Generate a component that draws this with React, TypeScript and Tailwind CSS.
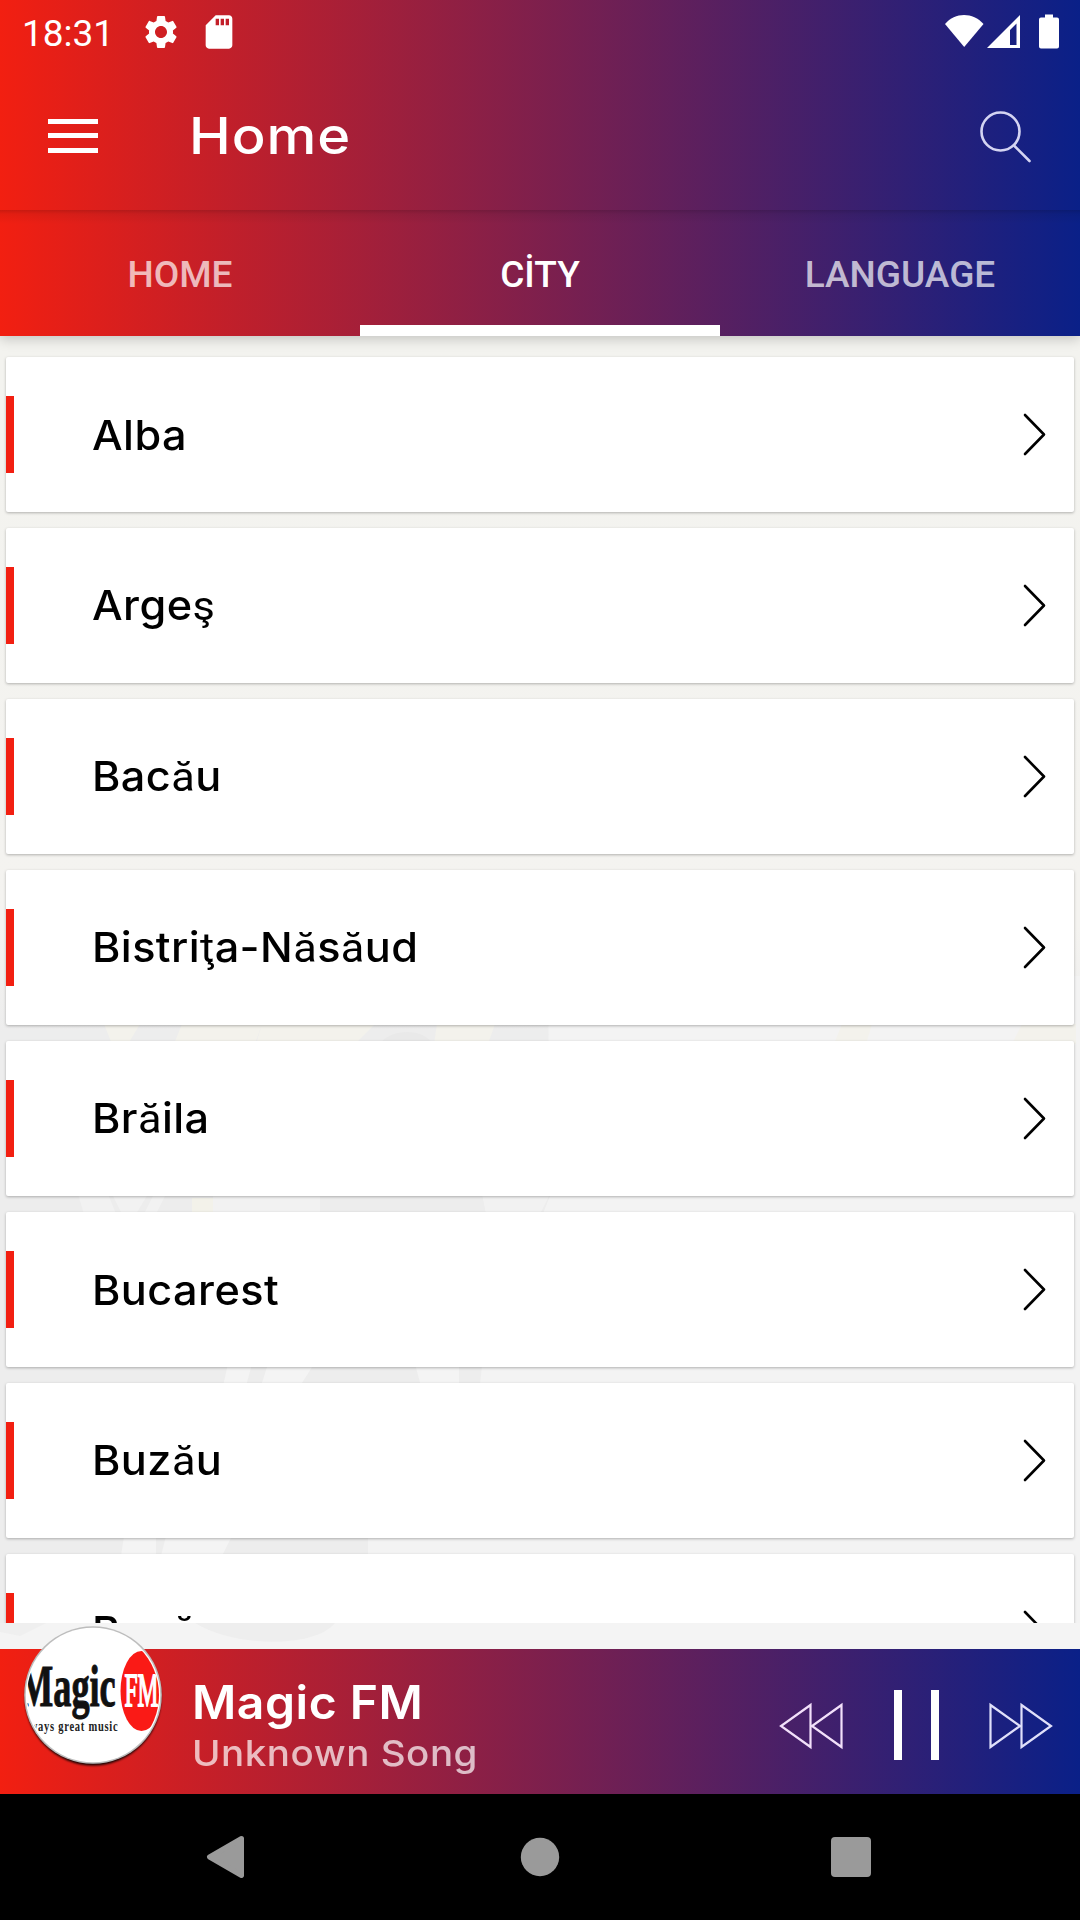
import { MdSdCard, MdSettings } from "react-icons/md"

const TABS = ["HOME", "CİTY", "LANGUAGE"]

const CITIES = [
  { id: 1, name: "Alba" },
  { id: 2, name: "Argeş" },
  { id: 3, name: "Bacău" },
  { id: 4, name: "Bistriţa-Năsăud" },
  { id: 5, name: "Brăila" },
  { id: 6, name: "Bucarest" },
  { id: 7, name: "Buzău" },
  { id: 8, name: "Buzău" },
]

// Accented letters fall back to the system font
function CityName({ name }: { name: string }) {
  return (
    <span className="inline-block origin-left scale-x-[1.055] font-['Inter',sans-serif] font-medium text-[41px] leading-[50px] tracking-[0.4px] text-black whitespace-nowrap">
      {name.split(/([ăşţ])/).map((part, i) =>
        i % 2 === 1 ? (
          <span key={i} className="font-['Roboto',sans-serif] font-normal">
            {part}
          </span>
        ) : (
          part
        )
      )}
    </span>
  )
}

function CityCard({ name }: { name: string }) {
  return (
    <li className="flex items-center h-[155px] shrink-0 bg-white rounded-[2px] shadow-[0_1px_3px_rgba(0,0,0,0.28)]">
      <div className="w-2 h-[77px] bg-[#f21f11]" />
      <div className="flex-1 pl-[78px]">
        <CityName name={name} />
      </div>
      <svg className="w-[23px] h-[43px] mr-7" viewBox="0 0 23 43" fill="none" stroke="black">
        <path d="M2 2L21 21.5L2 41" strokeWidth="2.6" strokeLinecap="round" strokeLinejoin="round" />
      </svg>
    </li>
  )
}

function StatusBar() {
  return (
    <div className="flex items-center h-[63px] pl-[22px] pr-[21px] text-white">
      <span className="w-[119px] text-[37px] leading-[63px] pt-[3px]">18:31</span>
      <MdSettings className="w-10 h-10" />
      <MdSdCard className="w-10 h-10 ml-[18px]" />
      <div className="flex-1" />
      <svg className="w-[115px] h-[36px]" viewBox="0 0 115 36" fill="white">
        {/* Wifi */}
        <path d="M1 10C11 -2 29 -2 39.500 10L20.200 33Z" />
        {/* Signal */}
        <path fillRule="evenodd" d="M43 34L76 1V34ZM66 16V31H72.500V9.500Z" />
        {/* Battery */}
        <path d="M101 0.500H109V3.500H113Q115 3.500 115 5.500V32.500Q115 34.500 113 34.500H97Q95 34.500 95 32.500V5.500Q95 3.500 97 3.500H101Z" />
      </svg>
    </div>
  )
}

function Toolbar() {
  return (
    <div className="flex items-center h-[147px] pb-0.5 pl-12 pr-12">
      <button className="flex flex-col justify-between w-[50px] h-[34px]" aria-label="Open menu">
        <span className="block w-full h-[5px] bg-white" />
        <span className="block w-full h-[5px] bg-white" />
        <span className="block w-full h-[5px] bg-white" />
      </button>
      <h1 className="flex-1 ml-[91px] text-white">
        <span className="inline-block origin-left scale-x-[1.1] font-['Inter',sans-serif] font-medium text-[51px] leading-[60px] tracking-[0.8px]">
          Home
        </span>
      </h1>
      <svg className="w-[54px] h-[54px]" viewBox="0 0 54 54" fill="none" stroke="#d4d4f2" strokeWidth="2.6" strokeLinecap="round">
        <circle cx="22.500" cy="22.500" r="19" />
        <path d="M36 36.500L51.500 52" />
      </svg>
    </div>
  )
}

function Tabs() {
  return (
    <div className="flex h-[126px] bg-[linear-gradient(to_bottom,rgba(0,0,0,0.16),rgba(0,0,0,0.06)_4px,transparent_14px)]">
      {TABS.map((tab) => (
        <button
          key={tab}
          className={`flex-1 pt-[15px] text-[37px] font-medium border-b-[11px] ${
            tab === "CİTY" ? "text-white border-white" : "text-white/70 border-transparent"
          }`}
        >
          {tab}
        </button>
      ))}
    </div>
  )
}

// Faint artwork behind the list
function Backdrop() {
  return (
    <svg className="absolute inset-0 w-full h-full" viewBox="0 0 1080 1313" preserveAspectRatio="none">
      <defs>
        <linearGradient id="bg" x1="0" y1="0" x2="0" y2="1">
          <stop offset="0" stopColor="#f3f3ef" />
          <stop offset="0.45" stopColor="#f4f3f0" />
          <stop offset="0.53" stopColor="#ededed" />
          <stop offset="1" stopColor="#ededed" />
        </linearGradient>
      </defs>
      <rect width="1080" height="1313" fill="url(#bg)" />
      <path d="M548 640H1080V1313H368V1200L480 1048L482 1030L550 860Z" fill="#f3f3f3" />
      <path d="M104 688H140L128 708H112ZM182 688H262L255 708H174ZM262 688H375L355 708H256ZM437 688H495L488 708H434ZM842 688H872L866 708H834ZM1022 688H1076V708H1012Z" fill="#f3f2ec" />
      <path d="M380 708C390 692 425 692 432 708Z" fill="#e9e9e9" />
      <path d="M78 858H108L116 878H84ZM112 858H148L136 878H122ZM154 858H166L156 878H144ZM482 858H550L540 878H486ZM213 858H320V878H213Z" fill="#f2f2f2" />
      <path d="M192 862H213V876H192Z" fill="#f3f2ea" />
      <path d="M228 1028H252L246 1050H223ZM268 1028H314L300 1050H261ZM415 1028H459V1050H421Z" fill="#f4f4f4" />
      <path d="M124 1200H156V1220H121ZM166 1200H232L222 1220H161Z" fill="#f4f4f4" />
      <rect y="1287" width="1080" height="26" fill="#f4f4f4" />
      <path d="M195 1287H335C315 1312 235 1312 195 1287Z" fill="#eeeeee" />
      <path d="M0 1287H46L20 1300L0 1296Z" fill="#efefef" />
    </svg>
  )
}

function StationLogo() {
  return (
    <svg className="absolute left-[21px] -top-[26px] w-[144px] h-[148px]" viewBox="0 0 144 148">
      <defs>
        <clipPath id="disc">
          <circle cx="72" cy="72" r="66" />
        </clipPath>
        <filter id="shade" x="-10%" y="-10%" width="120%" height="120%">
          <feGaussianBlur stdDeviation="1.300" />
        </filter>
      </defs>
      <circle cx="72" cy="74.500" r="68" fill="#000000" fillOpacity="0.9" filter="url(#shade)" />
      <circle cx="72" cy="72" r="68.800" fill="#bdbdbd" />
      <circle cx="72" cy="72" r="67.300" fill="#ffffff" />
      <g clipPath="url(#disc)" fontFamily="'Liberation Serif', serif" fontWeight="700">
        <text transform="translate(-2 82.500) scale(0.615 1)" fontSize="59" fill="#111111" stroke="#111111" strokeWidth="1">
          Magic
        </text>
        <text transform="translate(-1 107.500) scale(0.750 1)" fontSize="14" letterSpacing="1" fill="#222222">
          always great music
        </text>
        <ellipse cx="120.500" cy="68" rx="21" ry="40" fill="#fa1a16" />
        <text transform="translate(103.500 82.500) scale(0.510 1)" fontSize="46" fontWeight="400" fill="#ffffff" stroke="#ffffff" strokeWidth="1.800">
          FM
        </text>
      </g>
    </svg>
  )
}

function Player() {
  return (
    <div className="relative flex h-[145px] shrink-0 bg-[linear-gradient(to_right,#f21f11,#0a2088)]">
      <StationLogo />
      <div className="flex flex-col flex-1 items-start pl-[192px] pt-[26px] font-['Inter',sans-serif] font-medium text-white">
        <div className="origin-left scale-x-[1.045] text-[46px] leading-[55px] font-semibold tracking-[0.5px]">Magic FM</div>
        <div className="origin-left scale-x-[1.07] text-[36px] leading-[46px] text-white/70 tracking-[0.5px]">Unknown Song</div>
      </div>
      <div className="flex items-center pt-2 pr-[26px]">
        <svg className="w-[66px] h-[48px]" viewBox="0 0 66 48" fill="none" stroke="#f2e0fa" strokeWidth="2.2">
          <path d="M32.500 3V45L3 24ZM63.500 3V45L34 24Z" />
        </svg>
        <div className="flex justify-between w-[45px] h-[70px] ml-[50px] -mt-px">
          <span className="w-2 bg-white" />
          <span className="w-2 bg-white" />
        </div>
        <svg className="w-[66px] h-[48px] ml-[49px]" viewBox="0 0 66 48" fill="none" stroke="#e0e0fa" strokeWidth="2.2">
          <path d="M2.500 3V45L32 24ZM33.500 3V45L63 24Z" />
        </svg>
      </div>
    </div>
  )
}

function SystemNav() {
  return (
    <div className="h-[126px] shrink-0 bg-black">
      <svg className="w-full h-full" viewBox="0 0 1080 126" fill="#9a9a9a">
        <path d="M241.500 44.500L209.500 63L241.500 81.500Z" stroke="#9a9a9a" strokeWidth="5" strokeLinejoin="round" />
        <circle cx="540" cy="63" r="19.200" />
        <rect x="831" y="43" width="40" height="40" rx="4" />
      </svg>
    </div>
  )
}

export default function App() {
  return (
    <div className="flex flex-col w-[1080px] h-[1920px] overflow-hidden bg-[#f3f3f1] font-['Roboto',sans-serif]">
      <header className="relative z-10 h-[336px] shrink-0 bg-[linear-gradient(to_right,#f21f11,#0a2088)] shadow-[0_3px_12px_rgba(0,0,0,0.2)]">
        <StatusBar />
        <Toolbar />
        <Tabs />
      </header>

      <main className="relative h-[1313px] shrink-0">
        <Backdrop />
        <ul className="relative flex flex-col gap-4 h-[1287px] px-1.5 pt-[21px] overflow-hidden">
          {CITIES.map((city) => (
            <CityCard key={city.id} name={city.name} />
          ))}
        </ul>
      </main>

      <Player />
      <SystemNav />
    </div>
  )
}
